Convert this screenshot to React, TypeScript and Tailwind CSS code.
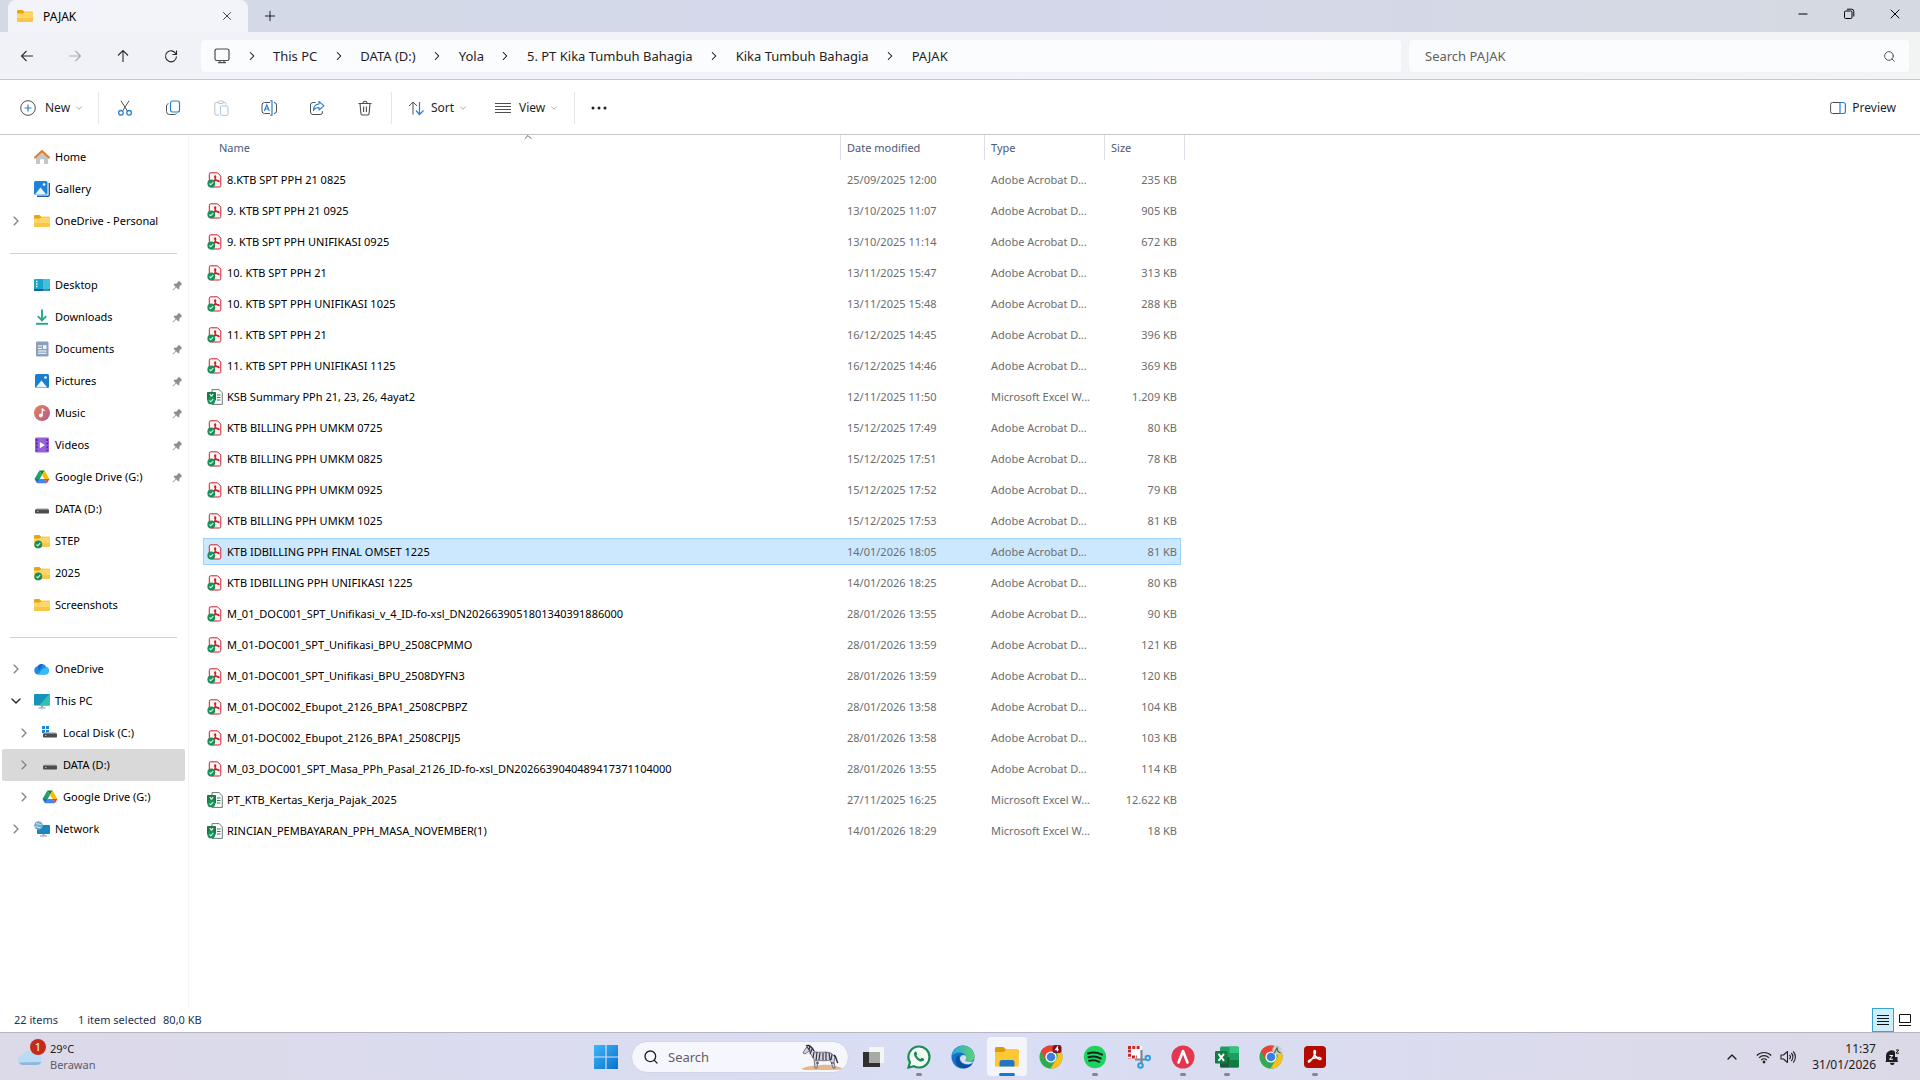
import type { ReactNode } from 'react';
import { ChevronDown, ChevronRight, ChevronUp, Minus, Plus, Search, X } from 'lucide-react';

type FileKind = 'pdf' | 'xls';

interface FileRow {
  name: string;
  date: string;
  kind: FileKind;
  size: string;
}

const files: FileRow[] = [
  { name: '8.KTB SPT PPH 21 0825', date: '25/09/2025 12:00', kind: 'pdf', size: '235 KB' },
  { name: '9. KTB SPT PPH 21 0925', date: '13/10/2025 11:07', kind: 'pdf', size: '905 KB' },
  { name: '9. KTB SPT PPH UNIFIKASI 0925', date: '13/10/2025 11:14', kind: 'pdf', size: '672 KB' },
  { name: '10. KTB SPT PPH 21', date: '13/11/2025 15:47', kind: 'pdf', size: '313 KB' },
  { name: '10. KTB SPT PPH UNIFIKASI 1025', date: '13/11/2025 15:48', kind: 'pdf', size: '288 KB' },
  { name: '11. KTB SPT PPH 21', date: '16/12/2025 14:45', kind: 'pdf', size: '396 KB' },
  { name: '11. KTB SPT PPH UNIFIKASI 1125', date: '16/12/2025 14:46', kind: 'pdf', size: '369 KB' },
  { name: 'KSB Summary PPh 21, 23, 26, 4ayat2', date: '12/11/2025 11:50', kind: 'xls', size: '1.209 KB' },
  { name: 'KTB BILLING PPH UMKM 0725', date: '15/12/2025 17:49', kind: 'pdf', size: '80 KB' },
  { name: 'KTB BILLING PPH UMKM 0825', date: '15/12/2025 17:51', kind: 'pdf', size: '78 KB' },
  { name: 'KTB BILLING PPH UMKM 0925', date: '15/12/2025 17:52', kind: 'pdf', size: '79 KB' },
  { name: 'KTB BILLING PPH UMKM 1025', date: '15/12/2025 17:53', kind: 'pdf', size: '81 KB' },
  { name: 'KTB IDBILLING PPH FINAL OMSET 1225', date: '14/01/2026 18:05', kind: 'pdf', size: '81 KB' },
  { name: 'KTB IDBILLING PPH UNIFIKASI 1225', date: '14/01/2026 18:25', kind: 'pdf', size: '80 KB' },
  { name: 'M_01_DOC001_SPT_Unifikasi_v_4_ID-fo-xsl_DN2026639051801340391886000', date: '28/01/2026 13:55', kind: 'pdf', size: '90 KB' },
  { name: 'M_01-DOC001_SPT_Unifikasi_BPU_2508CPMMO', date: '28/01/2026 13:59', kind: 'pdf', size: '121 KB' },
  { name: 'M_01-DOC001_SPT_Unifikasi_BPU_2508DYFN3', date: '28/01/2026 13:59', kind: 'pdf', size: '120 KB' },
  { name: 'M_01-DOC002_Ebupot_2126_BPA1_2508CPBPZ', date: '28/01/2026 13:58', kind: 'pdf', size: '104 KB' },
  { name: 'M_01-DOC002_Ebupot_2126_BPA1_2508CPIJ5', date: '28/01/2026 13:58', kind: 'pdf', size: '103 KB' },
  { name: 'M_03_DOC001_SPT_Masa_PPh_Pasal_2126_ID-fo-xsl_DN2026639040489417371104000', date: '28/01/2026 13:55', kind: 'pdf', size: '114 KB' },
  { name: 'PT_KTB_Kertas_Kerja_Pajak_2025', date: '27/11/2025 16:25', kind: 'xls', size: '12.622 KB' },
  { name: 'RINCIAN_PEMBAYARAN_PPH_MASA_NOVEMBER(1)', date: '14/01/2026 18:29', kind: 'xls', size: '18 KB' },
];

const selectedName = 'KTB IDBILLING PPH FINAL OMSET 1225';

const typeLabel: Record<FileKind, string> = {
  pdf: 'Adobe Acrobat D...',
  xls: 'Microsoft Excel W...',
};

const crumbs = ['This PC', 'DATA (D:)', 'Yola', '5. PT Kika Tumbuh Bahagia', 'Kika Tumbuh Bahagia', 'PAJAK'];

/* ---------- icons ---------- */

function Icon({ size = 16, children }: { size?: number; children: ReactNode }) {
  return (
    <svg width={size} height={size} viewBox={`0 0 ${size} ${size}`} fill="none" className="block shrink-0" aria-hidden="true">
      {children}
    </svg>
  );
}

function SyncedBadge() {
  return (
    <>
      <circle cx="4.3" cy="11.4" r="3.9" fill="#16915a" />
      <path d="M2.5 11.5l1.3 1.3 2.4-2.6" stroke="#d9f5e6" strokeWidth="1.1" />
    </>
  );
}

function FolderIcon({ synced = false }: { synced?: boolean }) {
  return (
    <Icon>
      <path d="M0 3.200C0 2.500.5 2 1.200 2h4.200l1.800 1.800h7.600c.7 0 1.200.5 1.200 1.200v3H0z" fill="#e5a50f" />
      <path d="M0 5.600h5.600l1.800-1.300h7.400c.7 0 1.200.5 1.200 1.200v7.300c0 .7-.5 1.200-1.200 1.200H1.200C.5 14 0 13.500 0 12.800z" fill="#ffd767" />
      <path d="M0 10h16v2.800c0 .7-.5 1.200-1.200 1.200H1.200C.5 14 0 13.500 0 12.800z" fill="#f9c648" />
      {synced && <SyncedBadge />}
    </Icon>
  );
}

function HomeIcon() {
  return (
    <Icon>
      <path d="M2 7.500L8 2l6 5.500v7a.5.5 0 0 1-.5.5H10v-4.500H6V15H2.500a.5.5 0 0 1-.5-.5z" fill="#c3c6ca" />
      <path d="M6 15v-3.500a1 1 0 0 1 1-1h2a1 1 0 0 1 1 1V15z" fill="#fff" />
      <path d="M1 8.600L8 2l7 6.600" stroke="#e57c24" strokeWidth="2" strokeLinecap="round" strokeLinejoin="round" />
    </Icon>
  );
}

function GalleryIcon() {
  return (
    <Icon>
      <path d="M3 15.300h11a1.500 1.500 0 0 0 1.300-1.500V2" stroke="#1d5fa8" strokeWidth="1.400" />
      <rect x="0" y="0" width="13.500" height="13.800" rx="1.500" fill="#1f83d8" />
      <path d="M1 13.500l5.500-7 5.800 7z" fill="#e9f5ff" />
      <circle cx="10" cy="3.500" r="1.300" fill="#fff" />
    </Icon>
  );
}

function DesktopIcon() {
  return (
    <Icon>
      <rect x="0" y="2" width="16" height="12" rx="1" fill="#1aa3cc" />
      <path d="M9 2h6a1 1 0 0 1 1 1v9L9 14z" fill="#3fc0dc" />
      <path d="M0 12h16v1a1 1 0 0 1-1 1H1a1 1 0 0 1-1-1z" fill="#0d6499" />
      <path d="M2 4.500h1.500M2 7h1.500M2 9.500h1.500" stroke="#e8fbff" strokeWidth="1.300" />
      <path d="M9.500 13h1M11.500 13h1M13.500 13h1" stroke="#fff" />
    </Icon>
  );
}

function DownloadsIcon() {
  return (
    <Icon>
      <path d="M8 .5v10.500M3.800 7.200L8 11.400l4.200-4.200" stroke="#2ba58b" strokeWidth="1.900" />
      <path d="M2 14.800h12" stroke="#2ba58b" strokeWidth="1.900" />
    </Icon>
  );
}

function DocumentsIcon() {
  return (
    <Icon>
      <rect x="2" y="0.500" width="12.500" height="15" rx="1.200" fill="#8aa0bd" />
      <path d="M4 5h4M4 7.500h4M4 10h8.500M4 12.300h8.500" stroke="#fff" strokeWidth="1.100" />
      <rect x="9" y="4.300" width="3.500" height="3.500" fill="#fff" />
    </Icon>
  );
}

function PicturesIcon() {
  return (
    <Icon>
      <rect x="1" y="1" width="14" height="14" rx="1.500" fill="#1b7fd0" />
      <path d="M1.800 14.500l5.700-7 5.800 7z" fill="#eaf6ff" />
      <circle cx="11.500" cy="4.500" r="1.300" fill="#fff" />
    </Icon>
  );
}

function MusicIcon() {
  return (
    <Icon>
      <defs>
        <linearGradient id="music" x1="0" y1="0" x2="1" y2="1">
          <stop offset="0" stopColor="#e88058" />
          <stop offset="1" stopColor="#b55a8c" />
        </linearGradient>
      </defs>
      <circle cx="8" cy="8" r="8" fill="url(#music)" />
      <circle cx="6.800" cy="10.500" r="1.900" fill="#fff" />
      <path d="M8.200 10.500v-7c.5 1.500 1.800 1.600 2.400 2.200" stroke="#fff" strokeWidth="1.300" />
    </Icon>
  );
}

function VideosIcon() {
  return (
    <Icon>
      <rect x="1" y="0.500" width="14" height="15" rx="1.200" fill="#9560da" />
      <path d="M2.800 2v12M13.200 2v12" stroke="#4a2191" strokeWidth="1.400" strokeDasharray="2 1.600" />
      <path d="M5.800 5v6.200l5-3.100z" fill="#fff" />
    </Icon>
  );
}

function GoogleDriveIcon() {
  return (
    <Icon>
      <path d="M5.400 1.500h5.200L8 6z" fill="#188038" />
      <path d="M5.400 1.500L.6 9.800l2.600 4.500L8 6z" fill="#1ea362" />
      <path d="M10.600 1.500L8 6l3 5h4.800z" fill="#fbbc04" />
      <path d="M3.200 14.300L5.600 10h5l2.400 4.300z" fill="#4285f4" />
      <path d="M.6 9.800h5l-2.400 4.500z" fill="#2a66d8" />
      <path d="M15.400 10h-4.800l2.400 4.300z" fill="#ea4335" />
    </Icon>
  );
}

function DriveIcon({ system = false }: { system?: boolean }) {
  return (
    <Icon>
      {system && <path d="M0 1h3v3H0zM4 1h3v3H4zM0 5h3v3H0zM4 5h3v3H4z" fill="#1b87d6" />}
      <path d="M2.500 7.200h11L15 9H1z" fill="#b9bcc0" />
      <rect x="1" y="8.500" width="14" height="4" rx="0.800" fill="#4a4c50" />
      <path d="M3 10.500h1.500" stroke="#6fd08c" />
    </Icon>
  );
}

function OneDriveIcon() {
  return (
    <Icon>
      <path d="M4 13.500a4 4 0 0 1-.6-7.900A5 5 0 0 1 12.300 6 3.900 3.900 0 0 1 12 13.500z" fill="#1a8fe3" />
      <path d="M8 8.500L12.300 6A3.900 3.900 0 0 1 12 13.500H4.500z" fill="#35bdf3" />
      <path d="M3.400 5.600A5 5 0 0 1 9 3.200L5 10z" fill="#1468c7" />
    </Icon>
  );
}

function PcIcon() {
  return (
    <Icon>
      <rect x="0" y="1" width="16" height="11.500" rx="1" fill="#1593bd" />
      <path d="M16 2v9.500a1 1 0 0 1-1 1H5L15.500 1z" fill="#35bfae" />
      <path d="M7 12.500h2v2H7z" fill="#8fa3b5" />
      <path d="M4.500 15h7" stroke="#7f95a8" />
    </Icon>
  );
}

function NetworkIcon() {
  return (
    <Icon>
      <rect x="3" y="4" width="13" height="9" rx="1" fill="#1a86bd" />
      <path d="M8.500 13h2v1.500h-2z" fill="#8fa3b5" />
      <path d="M6 15h7" stroke="#7f95a8" />
      <circle cx="4.500" cy="4.500" r="4.300" fill="#6fa9cb" />
      <path d="M2 2.500c2 1 3.500 0 5 1.500M1 6c2-1 3 1 5.500.5" stroke="#d6ebf6" />
    </Icon>
  );
}

function PinIcon() {
  return (
    <Icon size={11}>
      <path d="M6.800.6l3.600 3.600-1 .4-1.900 1.900-.3 2.300-.8.700-2.200-2.200L1 10.400l-.5-.5L3.600 6.700 1.500 4.500l.8-.7 2.300-.3 1.800-1.900z" fill="#8a8e94" />
    </Icon>
  );
}

function PdfIcon() {
  return (
    <Icon>
      <path d="M3.800.8h6.700l3.300 3.300v9.400a1.500 1.500 0 0 1-1.500 1.500H3.800a1.500 1.500 0 0 1-1.500-1.500v-11.200A1.500 1.500 0 0 1 3.800.8z" fill="#fff4f3" stroke="#c8202c" />
      <path d="M8 3.800c1.500 0 .6 3.200-1.800 6.400M8 3.800c-1.200.6.300 4.800 3.800 5.900.8 0 .3-1.400-1.500-1.300-1.700 0-3.300.7-4.100 1.300" stroke="#c8202c" strokeWidth="1.100" />
      <SyncedBadge />
    </Icon>
  );
}

function XlsIcon() {
  return (
    <Icon>
      <path d="M5 .6h7l3.300 3.200v11.600H5z" fill="#fff" stroke="#5b6a62" strokeWidth="0.900" />
      <path d="M10 6h3.500M10 8.500h3.500M10 11h3.500" stroke="#2b7a52" strokeWidth="1.100" />
      <rect x="0" y="3" width="9" height="8.500" rx="0.800" fill="#1a7a46" />
      <path d="M2.800 5l3.400 4.500M6.200 5L2.800 9.500" stroke="#fff" strokeWidth="1.200" />
      <SyncedBadge />
    </Icon>
  );
}

/* ---------- title bar and address bar ---------- */

function TitleBar() {
  return (
    <header className="flex h-8 items-start bg-linear-to-r from-[#d3dae5] via-[#d4d7eb] to-[#d5dae1] pl-2">
      <div className="flex h-8 w-60 items-center rounded-t-lg bg-[#f2f4f9] pl-[9px] pr-[14px]">
        <FolderIcon />
        <span className="ml-[10px] flex-1 pt-px text-xs">PAJAK</span>
        <button aria-label="Close tab">
          <X size={14} strokeWidth={1.25} />
        </button>
      </div>
      <button aria-label="New tab" className="ml-[14px] flex h-8 w-4 items-center justify-center">
        <Plus size={16} strokeWidth={1.25} />
      </button>
      <div className="ml-auto mr-[2px] flex h-7 items-center">
        <button aria-label="Minimize" className="flex w-[46px] justify-center">
          <Minus size={14} strokeWidth={1.75} />
        </button>
        <button aria-label="Restore" className="flex w-[46px] justify-center">
          <Icon size={12}>
            <rect x="1.500" y="3" width="7.500" height="7.500" rx="1.200" stroke="#000" />
            <path d="M4 1.200h4.500a2.300 2.300 0 0 1 2.300 2.300v5" stroke="#000" />
          </Icon>
        </button>
        <button aria-label="Close" className="flex w-[46px] justify-center">
          <X size={16} strokeWidth={1.5} />
        </button>
      </div>
    </header>
  );
}

function NavButton({ label, disabled, children }: { label: string; disabled?: boolean; children: ReactNode }) {
  return (
    <button aria-label={label} disabled={disabled} className="flex h-8 w-12 items-center justify-center text-[#2b2b2b] disabled:text-[#a9abb0]">
      <Icon>{children}</Icon>
    </button>
  );
}

function AddressBar() {
  return (
    <div className="flex h-12 items-center border-b border-[#c4c6d0] bg-linear-to-r from-[#f1f2f8] via-[#f2f2fa] to-[#f2f4f4] pl-[3px] pr-[11px]">
      <NavButton label="Back">
        <path d="M14 8H2.500M7.500 3l-5 5 5 5" stroke="currentColor" strokeWidth="1.100" />
      </NavButton>
      <NavButton label="Forward" disabled>
        <path d="M2 8h11.500M8.500 3l5 5-5 5" stroke="currentColor" strokeWidth="1.100" />
      </NavButton>
      <NavButton label="Up">
        <path d="M8 14V2.500M3 7.500l5-5 5 5" stroke="currentColor" strokeWidth="1.100" />
      </NavButton>
      <NavButton label="Refresh">
        <path d="M13 6a5.500 5.500 0 1 0 .5 2.500M13.500 2.500v4h-4" stroke="currentColor" strokeWidth="1.100" />
      </NavButton>
      <nav aria-label="Address" className="ml-[6px] flex h-8 min-w-0 flex-1 items-center rounded bg-[#fbfcfe] pl-[13px] pt-px">
        <Icon>
          <rect x="1" y="1" width="14" height="11.500" rx="1.800" stroke="#4b4b4b" strokeWidth="1.200" />
          <path d="M6 12.500v2M10 12.500v2M4 14.700h8" stroke="#4b4b4b" strokeWidth="1.200" />
        </Icon>
        {crumbs.map((crumb) => (
          <span key={crumb} className="flex items-center whitespace-nowrap">
            <span className="flex w-[43px] justify-center">
              <ChevronRight size={14} strokeWidth={1.75} />
            </span>
            <a href="#" className="text-[13px] text-[#1f1f1f]">{crumb}</a>
          </span>
        ))}
      </nav>
      <label className="ml-2 flex h-8 w-[500px] items-center rounded bg-[#fbfcfd] pl-4 pr-[13px] pt-px">
        <input
          type="text"
          aria-label="Search PAJAK"
          placeholder="Search PAJAK"
          className="min-w-0 flex-1 bg-transparent text-[13px] outline-none placeholder:text-[#5f6063]"
        />
        <Search size={13} strokeWidth={1.75} className="text-[#4a4a4a]" />
      </label>
    </div>
  );
}

/* ---------- command bar ---------- */

function Caret() {
  return <ChevronDown size={10} strokeWidth={1.75} className="text-[#8f8f8f]" />;
}

function Divider() {
  return <div className="h-8 w-px bg-[#e6e6e6]" />;
}

function ToolButton({ label, children }: { label: string; children: ReactNode }) {
  return (
    <button aria-label={label} className="flex h-8 w-12 items-center justify-center">
      <Icon>{children}</Icon>
    </button>
  );
}

function CommandBar() {
  const dark = '#4f4f4f';
  const blue = '#2a7fd0';
  return (
    <div className="flex h-[55px] items-center border-b border-[#c6c8d0] bg-white pt-px text-xs text-[#1f1f1f]">
      <button className="flex w-[98px] items-center pl-5">
        <Icon>
          <circle cx="8" cy="8" r="7.300" stroke={dark} />
          <path d="M8 4.500v7M4.500 8h7" stroke={blue} strokeWidth="1.200" />
        </Icon>
        <span className="ml-[9px] mr-1">New</span>
        <Caret />
      </button>
      <Divider />
      <div className="flex px-[2px]">
        <ToolButton label="Cut">
          <path d="M4 .8l6.400 10.200M12 .8L5.600 11" stroke={dark} />
          <circle cx="3.900" cy="12.800" r="2.300" stroke={blue} strokeWidth="1.300" />
          <circle cx="12.100" cy="12.800" r="2.300" stroke={blue} strokeWidth="1.300" />
        </ToolButton>
        <ToolButton label="Copy">
          <rect x="5.500" y="1" width="9" height="11" rx="2" stroke={blue} strokeWidth="1.200" />
          <path d="M3.500 3.700c-1.100.3-2 1.100-2 2.300v5.500a3 3 0 0 0 3 3h5c1 0 1.700-.5 2-1.200" stroke={dark} />
        </ToolButton>
        <ToolButton label="Paste">
          <path d="M5 2.500H3a1.200 1.200 0 0 0-1.200 1.200v10A1.200 1.200 0 0 0 3 15h3M10.500 2.500h1.200a1.200 1.200 0 0 1 1.200 1.200v1" stroke="#bcbcbc" />
          <rect x="5" y="1" width="5.500" height="2.500" rx="1.200" stroke="#bcbcbc" />
          <rect x="7.500" y="6" width="7.500" height="9.300" rx="1" stroke="#a9c6e4" />
        </ToolButton>
        <ToolButton label="Rename">
          <path d="M9 2.500H3.500A2.500 2.500 0 0 0 1 5v6a2.500 2.500 0 0 0 2.500 2.500H9M13 2.500A2.500 2.500 0 0 1 15.500 5v6a2.500 2.500 0 0 1-2.500 2.500" stroke={dark} />
          <path d="M11 1v14M9.300.8h2.300M9.300 15.200h2.300M3.300 11l2.500-6.200L8.300 11M4.200 9h3.200" stroke={blue} strokeWidth="1.200" />
        </ToolButton>
        <ToolButton label="Share">
          <path d="M6.500 2.500H4A2.500 2.500 0 0 0 1.500 5v7A2.500 2.500 0 0 0 4 14.500h7a2.500 2.500 0 0 0 2.500-2.500v-.8" stroke={dark} />
          <path d="M10 1.500l5 4.300-5 4.200V7.500c-3 0-4.500 1-5.500 3 0-3.500 2-6.300 5.500-6.500z" stroke={blue} strokeWidth="1.100" strokeLinejoin="round" />
        </ToolButton>
        <ToolButton label="Delete">
          <path d="M1.500 3.500h13M6 3.300a2 2 0 0 1 4 0M3 3.500l.9 10A1.600 1.600 0 0 0 5.500 15h5a1.600 1.600 0 0 0 1.600-1.500l.9-10M6.600 6.500V12M9.400 6.500V12" stroke={dark} strokeWidth="1.100" />
        </ToolButton>
      </div>
      <Divider />
      <button className="flex w-[87px] items-center pl-4">
        <Icon>
          <path d="M5 14.500V2M1 6l4-4 4 4" stroke={dark} />
          <path d="M11.500 2v12.500M8 10.500l3.500 4 4-4" stroke={blue} strokeWidth="1.200" />
        </Icon>
        <span className="ml-[7px] mr-1">Sort</span>
        <Caret />
      </button>
      <button className="flex w-[95px] items-center pl-4">
        <Icon>
          <path d="M0 3.500h16M0 6.500h16M0 9.500h16M0 12.500h16" stroke={dark} />
        </Icon>
        <span className="ml-2 mr-1">View</span>
        <Caret />
      </button>
      <Divider />
      <button aria-label="See more" className="flex w-12 justify-center">
        <Icon>
          <circle cx="2" cy="8" r="1.500" fill="#1f1f1f" />
          <circle cx="8" cy="8" r="1.500" fill="#1f1f1f" />
          <circle cx="14" cy="8" r="1.500" fill="#1f1f1f" />
        </Icon>
      </button>
      <button className="ml-auto mr-6 flex items-center gap-[6px]">
        <Icon>
          <path d="M10 2.500H2.500a2 2 0 0 0-1.900 2v7a2 2 0 0 0 1.900 2H10" stroke={dark} />
          <path d="M10 2.500h3.500a2 2 0 0 1 1.900 2v7a2 2 0 0 1-1.900 2H10z" stroke={blue} strokeWidth="1.200" />
        </Icon>
        Preview
      </button>
    </div>
  );
}

/* ---------- sidebar ---------- */

interface NavItemProps {
  label: string;
  icon: ReactNode;
  expand?: 'closed' | 'open';
  child?: boolean;
  pinned?: boolean;
  active?: boolean;
}

function NavItem({ label, icon, expand, child, pinned, active }: NavItemProps) {
  return (
    <li>
      <a
        href="#"
        className={`ml-[2px] mr-[3px] flex h-8 items-center rounded-xs text-black ${child ? 'pl-[14px]' : 'pl-[6px]'} ${active ? 'bg-[#d9d9d9]' : ''}`}
      >
        <span className="flex w-[26px] text-[#7d7d7d]">
          {expand === 'closed' && <ChevronRight size={16} strokeWidth={1.75} />}
          {expand === 'open' && <ChevronDown size={16} strokeWidth={2} className="text-[#222]" />}
        </span>
        {icon}
        <span className="ml-[5px] flex-1 whitespace-nowrap">{label}</span>
        {pinned && (
          <span className="mr-[2px]">
            <PinIcon />
          </span>
        )}
      </a>
    </li>
  );
}

function SidebarRule() {
  return (
    <li role="separator" className="flex h-8 items-center pl-[10px] pr-[11px]">
      <div className="h-px flex-1 bg-[#cfd0d2]" />
    </li>
  );
}

function Sidebar() {
  return (
    <aside className="w-[189px] shrink-0 border-r border-[#f5f5f5] pt-[6px]">
      <ul>
        <NavItem label="Home" icon={<HomeIcon />} />
        <NavItem label="Gallery" icon={<GalleryIcon />} />
        <NavItem label="OneDrive - Personal" icon={<FolderIcon />} expand="closed" />
        <SidebarRule />
        <NavItem label="Desktop" icon={<DesktopIcon />} pinned />
        <NavItem label="Downloads" icon={<DownloadsIcon />} pinned />
        <NavItem label="Documents" icon={<DocumentsIcon />} pinned />
        <NavItem label="Pictures" icon={<PicturesIcon />} pinned />
        <NavItem label="Music" icon={<MusicIcon />} pinned />
        <NavItem label="Videos" icon={<VideosIcon />} pinned />
        <NavItem label="Google Drive (G:)" icon={<GoogleDriveIcon />} pinned />
        <NavItem label="DATA (D:)" icon={<DriveIcon />} />
        <NavItem label="STEP" icon={<FolderIcon synced />} />
        <NavItem label="2025" icon={<FolderIcon synced />} />
        <NavItem label="Screenshots" icon={<FolderIcon />} />
        <SidebarRule />
        <NavItem label="OneDrive" icon={<OneDriveIcon />} expand="closed" />
        <NavItem label="This PC" icon={<PcIcon />} expand="open" />
        <NavItem label="Local Disk (C:)" icon={<DriveIcon system />} expand="closed" child />
        <NavItem label="DATA (D:)" icon={<DriveIcon />} expand="closed" child active />
        <NavItem label="Google Drive (G:)" icon={<GoogleDriveIcon />} expand="closed" child />
        <NavItem label="Network" icon={<NetworkIcon />} expand="closed" />
      </ul>
    </aside>
  );
}

/* ---------- file list ---------- */

function HeaderCell({ label, width, first, last }: { label: string; width: string; first?: boolean; last?: boolean }) {
  return (
    <th scope="col" className={`relative h-[25px] p-0 text-left font-normal text-[#4c5a76] ${width} ${first ? 'pl-4' : 'pl-[7px]'}`}>
      {label}
      {first && <ChevronUp size={12} strokeWidth={1.75} className="absolute left-1/2 top-[-4px] text-[#444]" />}
      {/* resize handle */}
      <span className={`absolute top-0 h-[25px] w-px bg-[#dde0e8] ${last ? '-right-[4px]' : '-right-px'}`} />
    </th>
  );
}

function FileTableRow({ file, selected }: { file: FileRow; selected: boolean }) {
  const cell = selected ? 'border-y border-[#99d1ff] bg-[#cce8ff]' : 'border-y border-transparent';
  return (
    <>
      <tr aria-selected={selected} className="h-[27px] whitespace-nowrap text-[#6d6d6d]">
        <td className={`border-l p-0 pl-[3px] ${cell}`}>
          <span className="flex items-center gap-1 text-black">
            {file.kind === 'pdf' ? <PdfIcon /> : <XlsIcon />}
            {file.name}
          </span>
        </td>
        <td className={`p-0 pl-[7px] ${cell}`}>{file.date}</td>
        <td className={`p-0 pl-[7px] ${cell}`}>{typeLabel[file.kind]}</td>
        <td className={`border-r p-0 pr-[3px] text-right ${cell}`}>{file.size}</td>
      </tr>
      <tr className="h-1" />
    </>
  );
}

function FileTable() {
  return (
    <table className="ml-[14px] w-[978px] table-fixed border-separate border-spacing-0">
      <thead>
        <tr>
          <HeaderCell label="Name" width="w-[637px]" first />
          <HeaderCell label="Date modified" width="w-36" />
          <HeaderCell label="Type" width="w-[120px]" />
          <HeaderCell label="Size" width="w-[77px]" last />
        </tr>
        <tr className="h-[6px]" />
      </thead>
      <tbody>
        {files.map((file) => (
          <FileTableRow key={file.name} file={file} selected={file.name === selectedName} />
        ))}
      </tbody>
    </table>
  );
}

function StatusBar() {
  return (
    <footer className="flex h-6 items-center bg-white pl-[14px] pr-1 text-[#24324f]">
      <span>22 items</span>
      <span className="ml-5">1 item selected</span>
      <span className="ml-[7px]">80,0 KB</span>
      <div className="ml-auto flex">
        <button aria-label="Details view" className="flex h-6 w-[22px] items-center justify-center border border-[#3aa0d8] bg-[#cdeefb]">
          <Icon size={12}>
            <path d="M0 1.500h12M0 4.500h12M0 7.500h12M0 10.500h12" stroke="#111" />
          </Icon>
        </button>
        <button aria-label="Large icons view" className="flex h-6 w-[22px] items-center justify-center">
          <Icon size={12}>
            <path d="M.5.5h11v8H.5zM0 11.500h12" stroke="#111" />
          </Icon>
        </button>
      </div>
    </footer>
  );
}

/* ---------- taskbar ---------- */

function WhatsAppLogo() {
  return (
    <Icon size={24}>
      <path d="M12 1.500a10.500 10.500 0 0 1 0 21c-1.900 0-3.600-.5-5.100-1.300l-5.400 1.300 1.400-5.200A10.500 10.500 0 0 1 12 1.500z" fill="#f3fbf6" stroke="#1f8a54" strokeWidth="2.200" />
      <path d="M7.500 7.200c.8-1 1.700-.9 2 0l.7 1.700c.1.500-.9 1.300-.7 1.700.8 1.500 2 2.600 3.700 3.300.5.200 1.100-1.300 1.700-1.100l1.900.9c.6.400.3 1.500-.3 2.100-1.200 1.100-2.700 1-4.600.1A11 11 0 0 1 7.400 11c-.8-1.500-.7-2.800.1-3.800z" fill="#1f8a54" />
    </Icon>
  );
}

function EdgeLogo() {
  return (
    <Icon size={24}>
      <defs>
        <linearGradient id="edgeTop" x1="0" y1="0.300" x2="1" y2="0.300">
          <stop offset="0" stopColor="#2aa5e0" />
          <stop offset="1" stopColor="#62d36a" />
        </linearGradient>
      </defs>
      <circle cx="12" cy="12" r="11.500" fill="#1273cf" />
      <path d="M.6 11A11.500 11.500 0 0 1 23.500 11c.2 4-2.600 5.700-5.500 5.700-2.400 0-4-.8-3.800-1.700.9-.8 1-1.800 1-2.500C15 10 12.500 7.500 9 7.500 5 7.500 1.500 9.500.6 11z" fill="url(#edgeTop)" />
      <path d="M14.200 15c.9-.8 1-1.800 1-2.500 0-1.300-1-2.500-2.700-2.500-2 0-3.500 1.300-3.500 3.200 0 3.700 3.500 6 7.500 6 2.200 0 4-.7 5-1.500l.6-1.500c-1 .4-2.500.5-4.100.5-2.400 0-4-.8-3.800-1.700z" fill="#d9dff2" />
      <path d="M9 10c-2.500.7-4.200 2.500-4.400 5-.3 4 3 7.800 8.400 8.300 3.500 0 6.700-1.600 8.500-4.500-1.300.8-3 1.200-5 1.200C12 20 8.200 17 8.200 12.800c0-1.100.3-2 .8-2.800z" fill="#0c4fa0" />
    </Icon>
  );
}

function ExplorerLogo() {
  return (
    <Icon size={26}>
      <path d="M1 4.500C1 3.700 1.600 3 2.500 3h7L12 5.500h11c1 0 1.800.7 1.800 1.700V10H1z" fill="#d99a14" />
      <path d="M1 8h8.500L12 6h11c1 0 1.800.7 1.800 1.700v14.800H1z" fill="#fcc934" />
      <path d="M5.500 22.500v-4A2.500 2.500 0 0 1 8 16h10a2.500 2.500 0 0 1 2.500 2.500v4z" fill="#1f76c4" />
    </Icon>
  );
}

function ChromeLogo({ badge }: { badge: ReactNode }) {
  return (
    <Icon size={24}>
      <circle cx="12" cy="12" r="11.500" fill="#34a853" />
      <path d="M12 .5a11.500 11.500 0 0 1 10 5.800H12L7 15 2 6.300A11.500 11.500 0 0 1 12 .5z" fill="#ea4335" />
      <path d="M22 6.300A11.500 11.500 0 0 1 11.500 23.500L17 14.800a5.700 5.700 0 0 0-.5-8.500z" fill="#fbc116" />
      <circle cx="12" cy="12" r="5.600" fill="#fff" />
      <circle cx="12" cy="12" r="4.300" fill="#3b7de0" />
      {badge}
    </Icon>
  );
}

function WorkBadge() {
  return (
    <>
      <rect x="13.500" y="0" width="9" height="8" rx="2.500" fill="#7d1420" />
      <path d="M18.500 6.500V2l-2 2.800h3.200" stroke="#fff" strokeWidth="1.100" />
    </>
  );
}

function PersonalBadge() {
  return (
    <>
      <circle cx="18" cy="5" r="4.600" fill="#c3d3d0" />
      <path d="M15 8.500l3-5.500 1 3.500 2.500 1.500" stroke="#4c6b66" strokeWidth="1.300" />
    </>
  );
}

function SpotifyLogo() {
  return (
    <Icon size={24}>
      <circle cx="12" cy="12" r="11.200" fill="#1ed35f" />
      <path d="M5 8.500c4.500-1.500 9.800-1 14 1.200M5.500 12.300c4-1.200 8.500-.8 12.200 1.200M6.200 15.800c3.500-.9 6.800-.6 10 1" stroke="#10261a" strokeWidth="2" strokeLinecap="round" />
    </Icon>
  );
}

function SnipLogo() {
  return (
    <Icon size={24}>
      <rect x="1" y="1" width="14" height="13" rx="1" fill="#fff" />
      <path d="M1 2.500h12M2.500 4.500v9M5 12h5" stroke="#c62828" strokeWidth="3" strokeDasharray="3 1.300" />
      <path d="M14.500 5v14M8 14.500h10" stroke="#7e8790" strokeWidth="2.200" />
      <circle cx="13.500" cy="20.500" r="2.300" stroke="#2c9be6" strokeWidth="1.900" />
      <circle cx="20.800" cy="13" r="2.300" stroke="#2c9be6" strokeWidth="1.900" />
    </Icon>
  );
}

function RedRoundLogo() {
  return (
    <Icon size={24}>
      <circle cx="12" cy="12" r="11.500" fill="#e2374f" />
      <path d="M7.500 17.500L12 6l4.500 11.500" stroke="#fff" strokeWidth="2.600" strokeLinecap="round" strokeLinejoin="round" />
    </Icon>
  );
}

function ExcelLogo() {
  return (
    <Icon size={24}>
      <rect x="5" y="1.500" width="19" height="21" rx="1.500" fill="#1f9d60" />
      <path d="M14.500 1.500h8A1.500 1.500 0 0 1 24 3v5h-9.500z" fill="#33c481" />
      <path d="M5 12h9.500v10.500h-8A1.500 1.500 0 0 1 5 21z" fill="#185c37" />
      <path d="M14.500 15H24v6a1.500 1.500 0 0 1-1.500 1.500h-8z" fill="#107c41" />
      <rect x="0" y="6" width="12.500" height="12.500" rx="1.200" fill="#107c41" />
      <path d="M3.500 8.800l5.500 7M9 8.800l-5.500 7" stroke="#fff" strokeWidth="1.900" />
    </Icon>
  );
}

function AcrobatLogo() {
  return (
    <Icon size={24}>
      <rect x="1" y="1" width="22" height="22" rx="4" fill="#b30b00" />
      <path d="M11.500 5.500c2.300 0 .7 5.800-5.200 11.500-.9.600-1.500-.6-.1-1.700 2.600-1.900 7.300-3.200 10.600-2.700 2.100.6 1.200 2.200-.5 1.700-3.300-1.200-6.500-6-4.800-8.800z" stroke="#fff" strokeWidth="1.500" />
    </Icon>
  );
}

function Zebra() {
  return (
    <svg width="44" height="28" viewBox="0 0 44 28" fill="none" className="block" aria-hidden="true">
      <path d="M1 26c7-4 15-3 20-4 8-1 16 1 21 3 1 1-3 2-8 2H5z" fill="#e5b78b" />
      <path d="M4 8l4-6 2 1 5 6c5 1 10-1 16 1l4 4-1 5 1 6h-2l-2-6-1-2c-4 1-8 1-12 0l-1 8h-2l-1-9c-2-2-3-5-5-8l-4 3-2-1z" fill="#d4d4de" stroke="#4a4657" strokeWidth="0.700" />
      <path d="M7 4l3 4M10 3L9 7M12 6l-2 5M14 9l-1 6M17 9l-1 9M20 10l-1 7M23 10v7M26 9v8M29 10l1 7M32 11l-1 6M16 20h3M31 20h3" stroke="#3b3748" strokeWidth="1.200" />
      <path d="M34 12c3 2 2 6 4 8" stroke="#3b3748" strokeWidth="1.600" />
      <path d="M6 3c3-2 6 1 8 5" stroke="#2b2838" strokeWidth="1.300" />
    </svg>
  );
}

function TaskButton({ label, running, active, children }: { label: string; running?: boolean; active?: boolean; children: ReactNode }) {
  return (
    <button
      aria-label={label}
      className={`relative flex h-[39px] w-10 items-center justify-center rounded ${active ? 'bg-[#f4f4fb]' : ''}`}
    >
      {children}
      {running && <span className="absolute bottom-0 h-[3px] w-[6px] rounded-full bg-[#85868f]" />}
      {active && <span className="absolute bottom-0 h-[3px] w-4 rounded-full bg-[#1c78cc]" />}
    </button>
  );
}

function Taskbar() {
  return (
    <div className="grid h-12 grid-cols-[1fr_auto_1fr] items-center border-t border-[#b6b5c4] bg-linear-to-r from-[#dcd9e8] via-[#d9def5] to-[#dcd9e7]">
      <button className="relative ml-4 flex w-fit items-center gap-2 text-left leading-4">
        <svg width="26" height="24" viewBox="0 0 26 24" fill="none" aria-hidden="true">
          <path d="M7 20a5 5 0 0 1-.4-10A7 7 0 0 1 19 9a5.500 5.500 0 0 1 1.500 11z" fill="#b9dcf4" />
          <path d="M3 17.500C4 19.500 5.500 20 7 20h13.500c2.500 0 4-1 5-3z" fill="#8fb7dc" />
        </svg>
        <span className="absolute -top-[2px] left-[14px] flex size-4 items-center justify-center rounded-full bg-[#c42b1c] text-[11px] text-white">1</span>
        <span>
          <span className="block text-[#1b1b1b]">29°C</span>
          <span className="block text-[#5c5b66]">Berawan</span>
        </span>
      </button>

      <div className="mr-1 flex items-center">
        <button aria-label="Start" className="flex w-[50px] justify-center">
          <Icon size={24}>
            <defs>
              <linearGradient id="win" x1="0" y1="0" x2="1" y2="1">
                <stop offset="0" stopColor="#3cb8f5" />
                <stop offset="1" stopColor="#0a6fd0" />
              </linearGradient>
            </defs>
            <path d="M0 0h11.400v11.400H0zM12.600 0H24v11.400H12.600zM0 12.600h11.400V24H0zM12.600 12.600H24V24H12.600z" fill="url(#win)" />
          </Icon>
        </button>
        <label className="flex h-8 w-[218px] items-center overflow-hidden rounded-full border border-[#d3d4e4] bg-[#f6f7fd] pl-[11px] pr-1">
          <Search size={16} strokeWidth={2} className="text-[#222]" />
          <input
            type="text"
            aria-label="Search"
            placeholder="Search"
            className="ml-[9px] w-0 flex-1 bg-transparent text-[13px] outline-none placeholder:text-[#5e5e66]"
          />
          <Zebra />
        </label>
        <div className="ml-1 mr-[6px]">
          <TaskButton label="Task view">
            <Icon size={24}>
              <rect x="8" y="2" width="15" height="16" fill="#f6f6f8" />
              <rect x="2" y="7" width="17" height="15" fill="#303030" />
              <rect x="8" y="7" width="11" height="11" fill="#a8a8a4" />
            </Icon>
          </TaskButton>
        </div>
        <div className="flex gap-1">
          <TaskButton label="WhatsApp" running><WhatsAppLogo /></TaskButton>
          <TaskButton label="Microsoft Edge"><EdgeLogo /></TaskButton>
          <TaskButton label="File Explorer" active><ExplorerLogo /></TaskButton>
          <TaskButton label="Google Chrome, work"><ChromeLogo badge={<WorkBadge />} /></TaskButton>
          <TaskButton label="Spotify" running><SpotifyLogo /></TaskButton>
          <TaskButton label="Snipping Tool"><SnipLogo /></TaskButton>
          <TaskButton label="Remote app" running><RedRoundLogo /></TaskButton>
          <TaskButton label="Excel" running><ExcelLogo /></TaskButton>
          <TaskButton label="Google Chrome, personal"><ChromeLogo badge={<PersonalBadge />} /></TaskButton>
          <TaskButton label="Adobe Acrobat" running><AcrobatLogo /></TaskButton>
        </div>
      </div>

      <div className="mr-5 flex items-center justify-end text-[#1b1b1b]">
        <button aria-label="Show hidden icons">
          <ChevronUp size={16} strokeWidth={2} />
        </button>
        <button aria-label="Network and volume" className="ml-4 flex gap-2">
          <Icon>
            <path d="M.8 6.500a10.200 10.200 0 0 1 14.400 0M3 8.800a7 7 0 0 1 10 0M5.200 11a4 4 0 0 1 5.600 0" stroke="#222" strokeWidth="1.200" />
            <circle cx="8" cy="13" r="1.400" fill="#222" />
          </Icon>
          <Icon>
            <path d="M1 6v4h2.500l4 3.500v-11L3.500 6z" stroke="#222" strokeWidth="1.100" strokeLinejoin="round" />
            <path d="M9.500 5.800a3.200 3.200 0 0 1 0 4.400M11.300 4a5.800 5.800 0 0 1 0 8M13.200 2.500a8 8 0 0 1 0 11" stroke="#222" strokeWidth="1.100" />
          </Icon>
        </button>
        <button className="ml-4 text-right text-xs leading-4">
          <span className="block">11:37</span>
          <span className="block">31/01/2026</span>
        </button>
        <button aria-label="Notifications" className="ml-2">
          <Icon>
            <path d="M2 12V7a5.500 5.500 0 0 1 9-4.300V8h2.500v4l1 1H1z" fill="#1d1d22" />
            <path d="M6 13.800h4.500a2.200 2.200 0 0 1-4.500 0z" fill="#1d1d22" />
            <path d="M5.500 6.500h3.200l-3.200 3.800h3.400" stroke="#fff" />
            <path d="M12 1h2.800L12 4.200h3" stroke="#1d1d22" />
          </Icon>
        </button>
      </div>
    </div>
  );
}

export default function App() {
  return (
    <div className="flex min-h-screen flex-col bg-white font-['Noto_Sans','Open_Sans',sans-serif] text-[11px] leading-4">
      <TitleBar />
      <AddressBar />
      <CommandBar />
      <div className="flex flex-1">
        <Sidebar />
        <main className="min-w-0 flex-1">
          <FileTable />
        </main>
      </div>
      <StatusBar />
      <Taskbar />
    </div>
  );
}
